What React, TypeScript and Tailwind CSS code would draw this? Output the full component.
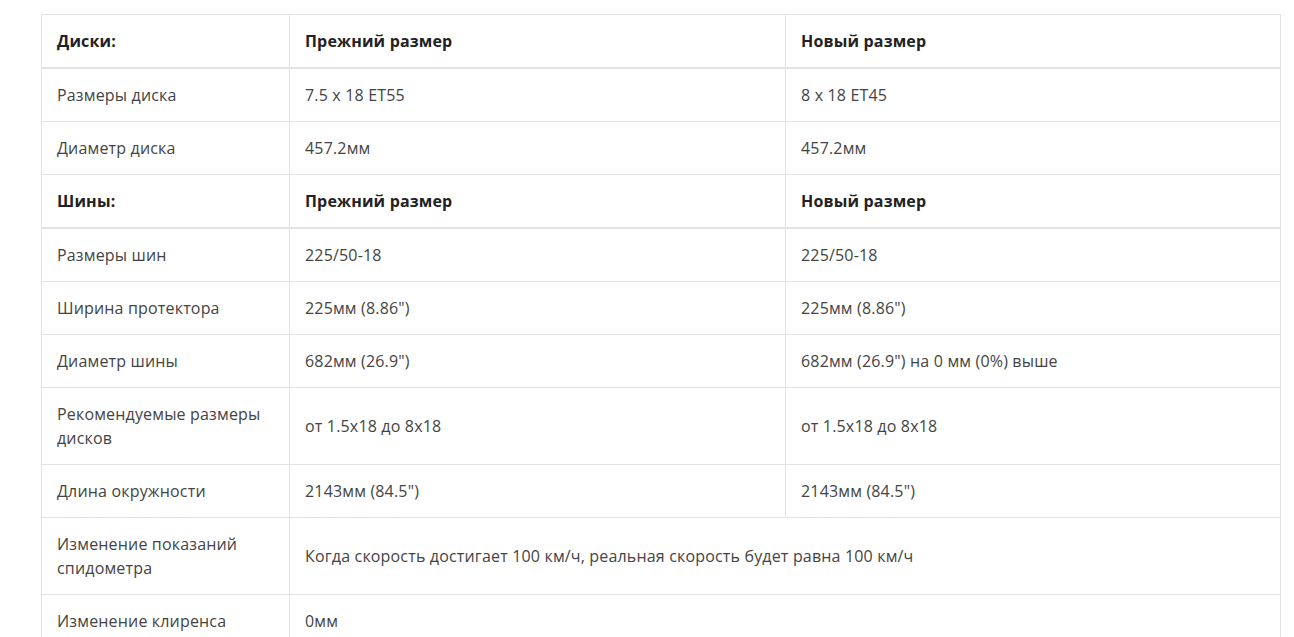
type Row = { label: string; a?: string; b?: string; span?: string; head?: boolean }

const rows: Row[] = [
  { label: 'Диски:', a: 'Прежний размер', b: 'Новый размер', head: true },
  { label: 'Размеры диска', a: '7.5 x 18 ET55', b: '8 x 18 ET45' },
  { label: 'Диаметр диска', a: '457.2мм', b: '457.2мм' },
  { label: 'Шины:', a: 'Прежний размер', b: 'Новый размер', head: true },
  { label: 'Размеры шин', a: '225/50-18', b: '225/50-18' },
  { label: 'Ширина протектора', a: '225мм (8.86")', b: '225мм (8.86")' },
  { label: 'Диаметр шины', a: '682мм (26.9")', b: '682мм (26.9") на 0 мм (0%) выше' },
  { label: 'Рекомендуемые размеры дисков', a: 'от 1.5x18 до 8x18', b: 'от 1.5x18 до 8x18' },
  { label: 'Длина окружности', a: '2143мм (84.5")', b: '2143мм (84.5")' },
  { label: 'Изменение показаний спидометра', span: 'Когда скорость достигает 100 км/ч, реальная скорость будет равна 100 км/ч' },
  { label: 'Изменение клиренса', span: '0мм' },
]

export default function App() {
  return (
    <div className="min-h-screen bg-white pt-[14px] pl-[41px] pr-[13px] font-['Open_Sans',sans-serif] text-[16px] leading-[24px] tracking-[0.17px] text-[#444]">
      <table className="w-[1240px] table-fixed border-collapse border border-[#e3e3e3]">
        <colgroup>
          <col className="w-[248px]" />
          <col className="w-[496px]" />
          <col />
        </colgroup>
        <tbody>
          {rows.map((r, i) => {
            const cell = `border-[#e3e3e3] px-[15px] py-[14px] text-left align-middle ${
              r.head ? 'border-b-2 font-bold text-[#222]' : 'border-b'
            }`
            return (
              <tr key={i}>
                <td className={`${cell} border-r`}>{r.label}</td>
                {r.span !== undefined ? (
                  <td colSpan={2} className={cell}>{r.span}</td>
                ) : (
                  <>
                    <td className={`${cell} border-r`}>{r.a}</td>
                    <td className={cell}>{r.b}</td>
                  </>
                )}
              </tr>
            )
          })}
        </tbody>
      </table>
    </div>
  )
}
